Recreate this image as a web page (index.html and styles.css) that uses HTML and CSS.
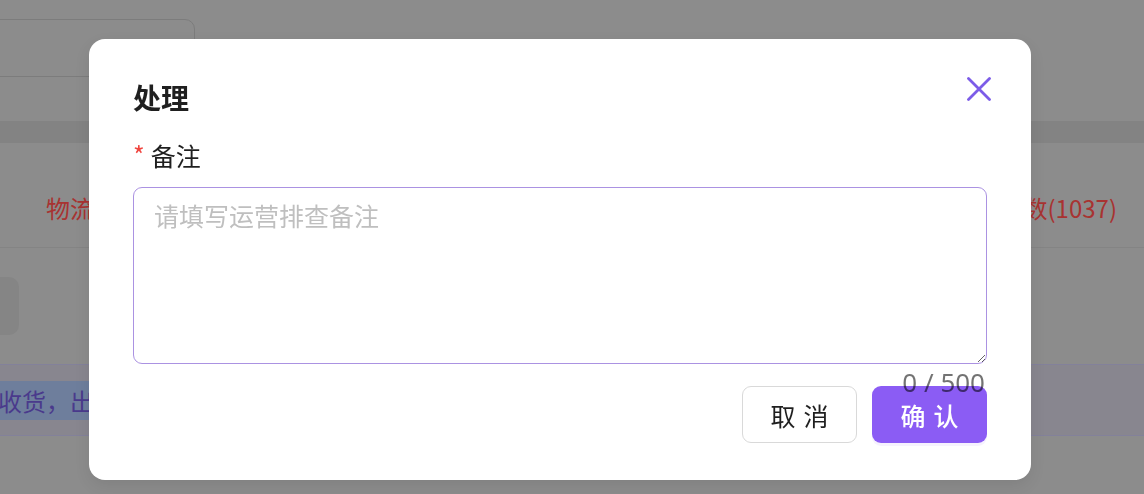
FILE: index.html
```html
<!DOCTYPE html>
<html lang="zh-CN">
<head>
    <meta charset="UTF-8">
    <meta name="viewport" content="width=device-width, initial-scale=1.0">
    <title>处理</title>
    <link rel="stylesheet" href="styles.css">
</head>
<body>
    <div class="page">
        <div class="search-box"></div>
        <div class="band"></div>
        <div class="tabs">
            <span class="tab-red">物流异常</span>
            <span class="tab-red">异常总数(1037)</span>
        </div>
        <div class="ghost-btn"></div>
        <div class="row-active">
            <span class="selected">收货，出库异常</span>
        </div>
    </div>

    <div class="mask">
        <div class="dialog">
            <button class="btn-close" aria-label="关闭">
                <svg width="24" height="24" viewBox="0 0 24 24">
                    <path d="M1.5 1.5 L22.5 22.5 M22.5 1.5 L1.5 22.5" stroke="#7c5ce8" stroke-width="2.8" stroke-linecap="round" fill="none"/>
                </svg>
            </button>
            <h2 class="dialog-title">处理</h2>
            <label class="field-label" for="remark"><span class="required">*</span>备注</label>
            <div class="field">
                <textarea id="remark" placeholder="请填写运营排查备注" maxlength="500"></textarea>
                <span class="count">0 / 500</span>
            </div>
            <div class="footer">
                <button class="btn btn-cancel">取消</button>
                <button class="btn btn-ok">确认</button>
            </div>
        </div>
    </div>
</body>
</html>
```

FILE: styles.css
```css
html, body {
    margin: 0;
    padding: 0;
}
body {
    width: 1144px;
    height: 494px;
    overflow: hidden;
    background: #8c8c8c;
    font-family: "Noto Sans CJK SC", "Noto Sans", sans-serif;
}

/* dimmed page behind the dialog */
.page {
    padding-top: 19px;
}
.search-box {
    width: 203px;
    height: 56px;
    margin-left: -10px;
    border: 1px solid #7c7c7c;
    border-radius: 0 10px 10px 0;
}
.band {
    height: 22px;
    margin-top: 44px;
    background: #838383;
}
.tabs {
    height: 79px;
    padding: 25px 27px 0 46px;
    display: flex;
    justify-content: space-between;
    align-items: center;
    border-bottom: 1px solid #848484;
}
.tab-red {
    color: #a83331;
    font-size: 24px;
}
.ghost-btn {
    width: 30px;
    height: 58px;
    margin: 29px 0 0 -11px;
    border-radius: 10px;
    background: #858585;
}
.row-active {
    height: 70px;
    margin-top: 29px;
    border-top: 1px solid #83819a;
    border-bottom: 1px solid #83819a;
    background: #88868f;
    display: flex;
    align-items: center;
}
.selected {
    margin-left: -2px;
    line-height: 39px;
    font-size: 24px;
    color: #4a3a8c;
    background: #6e7e9c;
}

/* dialog */
.mask {
    position: fixed;
    inset: 0;
}
.dialog {
    position: relative;
    width: 942px;
    margin: 39px 0 0 89px;
    padding: 38px 44px 37px 44px;
    box-sizing: border-box;
    background: #fff;
    border-radius: 16px;
    box-shadow: 0 6px 16px rgba(0, 0, 0, 0.08);
}
.btn-close {
    position: absolute;
    top: 38px;
    right: 40px;
    width: 24px;
    height: 24px;
    padding: 0;
    border: none;
    background: none;
    cursor: pointer;
}
.btn-close svg {
    display: block;
}
.dialog-title {
    margin: 0;
    font-size: 28px;
    line-height: 40px;
    font-weight: 700;
    color: #1f1f1f;
}
.field-label {
    display: block;
    margin-top: 20px;
    font-size: 25px;
    line-height: 34px;
    color: #1f1f1f;
}
.required {
    display: inline-block;
    margin-right: 6px;
    font-size: 25px;
    color: #f0453f;
    vertical-align: 1px;
}
.field {
    position: relative;
    margin-top: 15px;
}
.field textarea {
    display: block;
    width: 100%;
    height: 177px;
    box-sizing: border-box;
    padding: 9px 20px;
    border: 1px solid #ab92e2;
    border-radius: 9px;
    font-family: inherit;
    font-size: 25px;
    line-height: 36px;
    color: #1f1f1f;
    resize: vertical;
    outline: none;
}
.field textarea::placeholder {
    color: #bfbfbf;
}
.count {
    position: absolute;
    top: calc(100% + 3px);
    right: 2px;
    z-index: 2;
    font-family: "Noto Sans", sans-serif;
    font-size: 26px;
    line-height: 30px;
    color: rgba(0, 0, 0, 0.55);
}
.footer {
    margin-top: 22px;
    display: flex;
    justify-content: flex-end;
    gap: 15px;
}
.btn {
    width: 115px;
    height: 57px;
    padding: 0 0 0 8px;
    border-radius: 9px;
    font-family: inherit;
    font-size: 25px;
    letter-spacing: 8px;
    cursor: pointer;
}
.btn-cancel {
    border: 1px solid #d9d9d9;
    background: #fff;
    color: #1f1f1f;
}
.btn-ok {
    border: none;
    background: #8b5cf4;
    color: #fff;
    font-weight: 500;
    box-shadow: 0 3px 0 rgba(139, 92, 244, 0.08);
}
```
